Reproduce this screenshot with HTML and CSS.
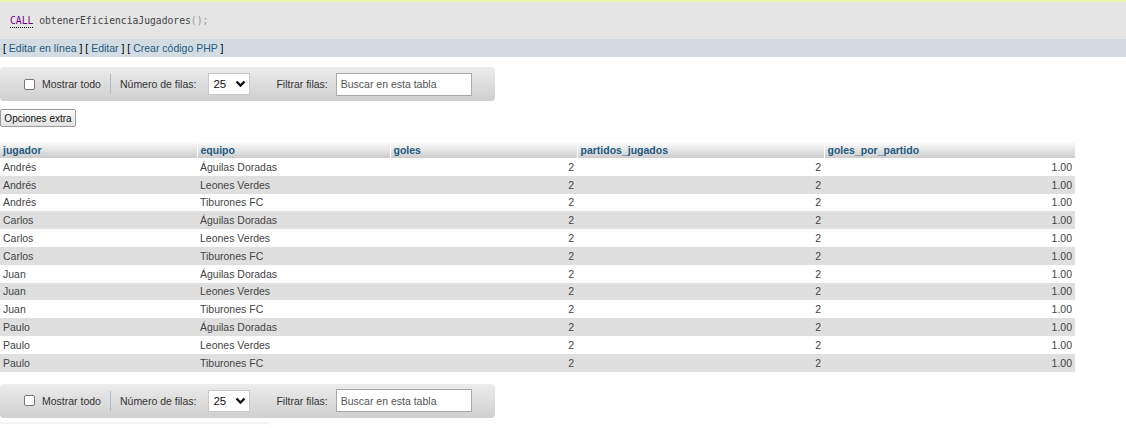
FILE: index.html
```html
<!DOCTYPE html>
<html lang="es">
<head>
<meta charset="utf-8">
<title>Resultado</title>
<link rel="stylesheet" href="styles.css">
</head>
<body>
<div class="topline"></div>
<div class="sql"><code><span class="kw">CALL</span> <span class="fn">obtenerEficienciaJugadores</span><span class="punct">();</span></code></div>
<div class="links">[ <a href="#">Editar en línea</a> ] [ <a href="#">Editar</a> ] [ <a href="#">Crear código PHP</a> ]</div>

<div class="navbar">
  <label class="showall"><input type="checkbox" class="chk"> Mostrar todo</label>
  <span class="sep"></span>
  <span class="lbl">Número de filas:</span>
  <span class="select">25<svg class="chev" width="11" height="8" viewBox="0 0 11 8"><path d="M1.5 1.5 L5.5 5.5 L9.5 1.5" fill="none" stroke="#111" stroke-width="2.4"/></svg></span>
  <span class="lbl filt">Filtrar filas:</span>
  <span class="search">Buscar en esta tabla</span>
</div>

<button class="extra">Opciones extra</button>

<table class="data">
  <colgroup><col class="c1"><col class="c2"><col class="c3"><col class="c4"><col class="c5"></colgroup>
  <thead>
    <tr><th>jugador</th><th>equipo</th><th>goles</th><th>partidos_jugados</th><th>goles_por_partido</th></tr>
  </thead>
  <tbody>
    <tr><td>Andrés</td><td>Águilas Doradas</td><td class="num">2</td><td class="num">2</td><td class="num">1.00</td></tr>
    <tr><td>Andrés</td><td>Leones Verdes</td><td class="num">2</td><td class="num">2</td><td class="num">1.00</td></tr>
    <tr><td>Andrés</td><td>Tiburones FC</td><td class="num">2</td><td class="num">2</td><td class="num">1.00</td></tr>
    <tr><td>Carlos</td><td>Águilas Doradas</td><td class="num">2</td><td class="num">2</td><td class="num">1.00</td></tr>
    <tr><td>Carlos</td><td>Leones Verdes</td><td class="num">2</td><td class="num">2</td><td class="num">1.00</td></tr>
    <tr><td>Carlos</td><td>Tiburones FC</td><td class="num">2</td><td class="num">2</td><td class="num">1.00</td></tr>
    <tr><td>Juan</td><td>Águilas Doradas</td><td class="num">2</td><td class="num">2</td><td class="num">1.00</td></tr>
    <tr><td>Juan</td><td>Leones Verdes</td><td class="num">2</td><td class="num">2</td><td class="num">1.00</td></tr>
    <tr><td>Juan</td><td>Tiburones FC</td><td class="num">2</td><td class="num">2</td><td class="num">1.00</td></tr>
    <tr><td>Paulo</td><td>Águilas Doradas</td><td class="num">2</td><td class="num">2</td><td class="num">1.00</td></tr>
    <tr><td>Paulo</td><td>Leones Verdes</td><td class="num">2</td><td class="num">2</td><td class="num">1.00</td></tr>
    <tr><td>Paulo</td><td>Tiburones FC</td><td class="num">2</td><td class="num">2</td><td class="num">1.00</td></tr>
  </tbody>
</table>

<div class="navbar bottom">
  <label class="showall"><input type="checkbox" class="chk"> Mostrar todo</label>
  <span class="sep"></span>
  <span class="lbl">Número de filas:</span>
  <span class="select">25<svg class="chev" width="11" height="8" viewBox="0 0 11 8"><path d="M1.5 1.5 L5.5 5.5 L9.5 1.5" fill="none" stroke="#111" stroke-width="2.4"/></svg></span>
  <span class="lbl filt">Filtrar filas:</span>
  <span class="search">Buscar en esta tabla</span>
</div>

<div class="next"></div>
</body>
</html>
```

FILE: styles.css
```css
html, body {
  margin: 0;
  padding: 0;
  background: #fff;
  font-family: "Liberation Sans", Arial, sans-serif;
  font-size: 10.5px;
  color: #444;
}

.topline {
  height: 2px;
  background: #e9f5a4;
}

.sql {
  height: 37px;
  line-height: 37px;
  background: #e5e5e5;
  padding-left: 10px;
}

.sql code {
  font-family: "DejaVu Sans Mono", "Liberation Mono", monospace;
  font-size: 9.7px;
  color: #444;
}

.sql .kw {
  color: #770088;
  border-bottom: 1px dotted #000;
  line-height: 12px;
  display: inline-block;
}

.sql .punct {
  color: #999;
}

.links {
  height: 18px;
  line-height: 18px;
  background: #d4dce3;
  padding-left: 3px;
  color: #000;
}

.links a {
  color: #235a81;
  text-decoration: none;
}

.navbar {
  width: 495px;
  height: 34px;
  margin-top: 10px;
  box-sizing: border-box;
  border-radius: 4px;
  background: linear-gradient(#ececec, #cfcfcf);
  display: flex;
  align-items: center;
  padding-left: 24px;
  color: #333;
}

.showall {
  display: flex;
  align-items: center;
}

.chk {
  appearance: none;
  -webkit-appearance: none;
  width: 11px;
  height: 11px;
  margin: 0 7px 0 0;
  border: 1px solid #777;
  border-radius: 2px;
  background: #fff;
  box-sizing: border-box;
}

.sep {
  width: 1px;
  height: 20px;
  background: #a9bccd;
  margin: 0 9px 0 9px;
}

.select {
  margin-left: 12px;
  width: 42px;
  height: 22px;
  box-sizing: border-box;
  border: 1px solid #c8c8c8;
  background: #fff;
  display: flex;
  align-items: center;
  justify-content: space-between;
  padding: 0 3px 0 4px;
  color: #111;
  font-size: 11.5px;
}

.filt {
  margin-left: 26px;
}

.search {
  margin-left: 8px;
  width: 136px;
  height: 23px;
  box-sizing: border-box;
  border: 1px solid #a8a8a8;
  background: #fff;
  display: flex;
  align-items: center;
  padding-left: 4px;
  color: #555;
}

.extra {
  display: block;
  margin: 8px 0 0 0;
  width: 76px;
  height: 18px;
  padding: 0;
  font-family: "Liberation Sans", Arial, sans-serif;
  font-size: 10px;
  color: #111;
  background: linear-gradient(#fcfcfc, #e2e2e2);
  border: 1px solid #9a9a9a;
  border-radius: 2px;
}

.data {
  margin-top: 14px;
  width: 1075px;
  border-collapse: collapse;
  table-layout: fixed;
}

.c1 { width: 197px; }
.c2 { width: 193px; }
.c3 { width: 187px; }
.c4 { width: 247px; }
.c5 { width: 251px; }

.data th {
  height: 17px;
  padding: 0 0 0 3px;
  text-align: left;
  font-weight: bold;
  color: #235a81;
  background: linear-gradient(#ffffff, #cccccc);
  border-left: 1px solid #fff;
}

.data th:first-child {
  border-left: none;
}

.data td {
  height: 17.8px;
  padding: 0 0 0 3px;
  color: #444;
  white-space: nowrap;
}

.data td.num {
  text-align: right;
  padding: 0 3px 0 0;
}

.data tbody tr:nth-child(even) td {
  background: #dfdfdf;
}

.navbar.bottom {
  margin-top: 12px;
}

.next {
  width: 270px;
  height: 4px;
  margin-top: 6px;
  box-shadow: 0 -1px 3px rgba(0, 0, 0, 0.08);
}
```
